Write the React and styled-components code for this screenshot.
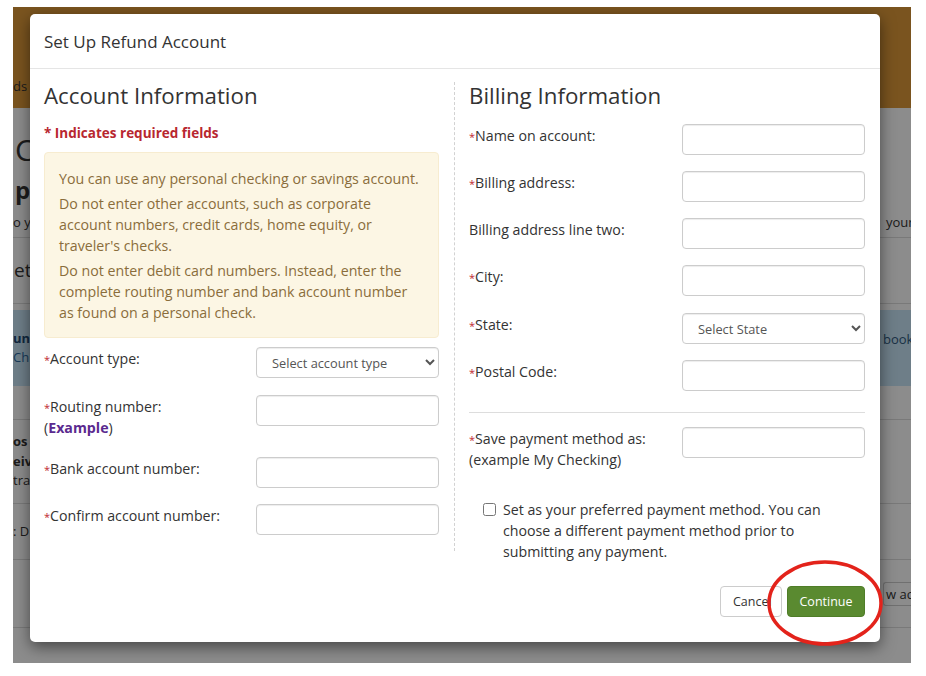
import React from "react";
import styled, { createGlobalStyle } from "styled-components";

const GlobalStyle = createGlobalStyle`
  html, body {
    margin: 0;
    padding: 0;
    background: #ffffff;
  }
  body {
    font-family: "Open Sans", "Liberation Sans", sans-serif;
    color: #333;
  }
  * {
    box-sizing: border-box;
  }
`;

const Screen = styled.div`
  width: 926px;
  height: 676px;
  padding: 7px 15px 13px 13px;
`;

const Page = styled.div`
  position: relative;
  width: 898px;
  height: 656px;
  overflow: hidden;
  background: #ffffff;
  display: flex;
  flex-direction: column;
`;

/* ---- page behind the backdrop ---- */

const BgHeader = styled.div`
  height: 101px;
  flex: none;
  background: #df9a3a;
  display: flex;
  align-items: flex-end;
  padding-bottom: 12px;
  font-size: 13px;
`;

const BgRow = styled.div`
  display: grid;
  grid-template-columns: 1fr 28px;
  align-items: ${(p) => p.$align || "center"};
  height: ${(p) => p.$h}px;
  flex: none;
  background: ${(p) => p.$bg || "transparent"};
  border-bottom: ${(p) => (p.$line ? "1px solid #dddddd" : "none")};
  margin-top: ${(p) => p.$mt || 0}px;
  white-space: nowrap;
  overflow: hidden;
`;

const BgText = styled.div`
  font-size: ${(p) => p.$size || 13}px;
  font-weight: ${(p) => (p.$bold ? 700 : 400)};
  color: ${(p) => p.$color || "#333333"};
  line-height: 1.5;
  padding-left: ${(p) => p.$pl || 0}px;
  padding-bottom: ${(p) => p.$pb || 0}px;
  overflow: hidden;
`;

const BgButton = styled.div`
  border: 1px solid #cccccc;
  border-right: none;
  border-radius: 3px 0 0 3px;
  height: 24px;
  font-size: 13px;
  line-height: 22px;
  padding-left: 2px;
  color: #333;
  overflow: hidden;
`;

const Backdrop = styled.div`
  position: absolute;
  inset: 0;
  background: rgba(0, 0, 0, 0.45);
`;

/* ---- modal ---- */

const Modal = styled.div`
  position: absolute;
  left: 17px;
  top: 7px;
  width: 850px;
  height: 628px;
  background: #ffffff;
  border-radius: 5px;
  box-shadow: 0 5px 15px rgba(0, 0, 0, 0.5);
  display: flex;
  flex-direction: column;
`;

const ModalHeader = styled.div`
  height: 55px;
  border-bottom: 1px solid #e5e5e5;
  padding: 0 14px;
  display: flex;
  align-items: center;
`;

const ModalTitle = styled.h4`
  margin: 0;
  font-size: 17px;
  font-weight: 400;
  color: #333;
`;

const ModalBody = styled.div`
  flex: 1;
  display: grid;
  grid-template-columns: 411px 1fr;
  align-items: start;
  padding: 13px 15px 0 14px;
`;

const Column = styled.div`
  display: flex;
  flex-direction: column;
  padding-right: ${(p) => (p.$divided ? 15 : 0)}px;
  padding-left: ${(p) => (p.$divided ? 0 : 14)}px;
  padding-bottom: ${(p) => (p.$divided ? 16 : 0)}px;
  border-right: ${(p) => (p.$divided ? "1px dashed #d2d2d2" : "none")};
`;

const SectionTitle = styled.h3`
  margin: 0;
  font-size: 22.3px;
  font-weight: 400;
  line-height: 28px;
  color: #333;
`;

const RequiredNote = styled.div`
  margin-top: 13px;
  font-size: 13.5px;
  font-weight: 700;
  line-height: 21px;
  color: #b8272f;
`;

const Notice = styled.div`
  margin-top: 8px;
  padding: 15px 14px 14px;
  background: #fcf6e4;
  border: 1px solid #f7ecd0;
  border-radius: 4px;
  color: #8a6d3b;
  font-size: 14.2px;
  line-height: 21px;
`;

const NoticeLine = styled.p`
  margin: 0 0 4px;
  &:last-child {
    margin-bottom: 0;
  }
`;

const FieldRow = styled.div`
  display: grid;
  grid-template-columns: 1fr 183px;
  align-items: start;
  margin-top: ${(p) => p.$mt ?? 16}px;
`;

const Label = styled.label`
  font-size: 14.2px;
  line-height: 21px;
  padding-top: 1px;
  color: #333;
`;

const Star = styled.span`
  color: #c0282f;
  font-size: 11px;
  vertical-align: top;
  position: relative;
  top: 1px;
`;

const ExampleLink = styled.a`
  color: #5b2a8f;
  font-weight: 700;
  text-decoration: none;
`;

const TextInput = styled.input`
  width: 183px;
  height: 31px;
  border: 1px solid #cccccc;
  border-radius: 4px;
  box-shadow: inset 0 1px 1px rgba(0, 0, 0, 0.075);
  padding: 6px 12px;
  font-family: inherit;
  font-size: 13px;
  background: #fff;
`;

const Select = styled.select`
  width: 183px;
  height: 31px;
  border: 1px solid #cccccc;
  border-radius: 4px;
  box-shadow: inset 0 1px 1px rgba(0, 0, 0, 0.075);
  padding: 4px 6px 4px 11px;
  font-family: inherit;
  font-size: 12.8px;
  color: #555;
  background: #fff;
`;

const Rule = styled.hr`
  margin: 21px 0 0;
  border: 0;
  border-top: 1px solid #dddddd;
`;

const CheckRow = styled.label`
  display: flex;
  gap: 4px;
  margin-top: 29px;
  padding-left: 14px;
  font-size: 14.2px;
  line-height: 21px;
  color: #333;
`;

const Check = styled.input`
  margin: 4px 3px 0 0;
  width: 13px;
  height: 13px;
  flex: none;
`;

const Footer = styled.div`
  display: flex;
  justify-content: flex-end;
  gap: 5px;
  padding: 0 15px 25px;
`;

const Button = styled.button`
  height: 31px;
  padding: 0 10px 0 ${(p) => (p.$primary ? 10 : 12)}px;
  border-radius: 4px;
  font-family: inherit;
  font-size: 12.5px;
  border: 1px solid ${(p) => (p.$primary ? "#4f7d28" : "#cccccc")};
  background: ${(p) => (p.$primary ? "#5a8a30" : "#ffffff")};
  color: ${(p) => (p.$primary ? "#ffffff" : "#333333")};
  width: ${(p) => p.$w}px;
  text-align: ${(p) => (p.$primary ? "center" : "left")};
`;

const Highlight = styled.svg`
  position: absolute;
  left: 753px;
  top: 549px;
  pointer-events: none;
`;

const Req = ({ children }) => (
  <>
    <Star>*</Star>
    {children}
  </>
);

const Field = ({ label, required, select, placeholder, mt, extra }) => (
  <FieldRow $mt={mt}>
    <Label>
      {required ? <Req>{label}</Req> : label}
      {extra}
    </Label>
    {select ? (
      <Select defaultValue="">
        <option value="">{placeholder}</option>
      </Select>
    ) : (
      <TextInput type="text" />
    )}
  </FieldRow>
);

export default function App() {
  return (
    <>
      <GlobalStyle />
      <Screen>
        <Page>
          <BgHeader>
            <BgText>ds</BgText>
          </BgHeader>
          <BgRow $h={64} $align="end">
            <BgText $size={30} $pl={2}>Co</BgText>
            <div />
          </BgRow>
          <BgRow $h={36}>
            <BgText $size={24} $bold $pl={2}>pa</BgText>
            <div />
          </BgRow>
          <BgRow $h={30} $line>
            <BgText>o you</BgText>
            <BgText $pl={3}>your</BgText>
          </BgRow>
          <BgRow $h={66} $line>
            <BgText $size={19} $pl={1}>et</BgText>
            <div />
          </BgRow>
          <BgRow $h={76} $bg="#c8e6f8" $mt={6}>
            <BgText>
              <BgText $bold $color="#1f4a73">un</BgText>
              <BgText $color="#2d6aa3">Ch</BgText>
            </BgText>
            <BgText $color="#31597d" $pb={16}>
              book
            </BgText>
          </BgRow>
          <BgRow $h={34} $line>
            <div />
            <div />
          </BgRow>
          <BgRow $h={84} $line>
            <BgText>
              <BgText $bold>os</BgText>
              <BgText $bold>eiv</BgText>
              <BgText>tra</BgText>
            </BgText>
            <div />
          </BgRow>
          <BgRow $h={56} $line>
            <BgText>: D</BgText>
            <div />
          </BgRow>
          <BgRow $h={68} $line>
            <div />
            <BgButton>w ac</BgButton>
          </BgRow>

          <Backdrop />

          <Modal>
            <ModalHeader>
              <ModalTitle>Set Up Refund Account</ModalTitle>
            </ModalHeader>
            <ModalBody>
              <Column $divided>
                <SectionTitle>Account Information</SectionTitle>
                <RequiredNote>* Indicates required fields</RequiredNote>
                <Notice>
                  <NoticeLine>
                    You can use any personal checking or savings account.
                  </NoticeLine>
                  <NoticeLine>
                    Do not enter other accounts, such as corporate account
                    numbers, credit cards, home equity, or traveler's checks.
                  </NoticeLine>
                  <NoticeLine>
                    Do not enter debit card numbers. Instead, enter the
                    complete routing number and bank account number as found on
                    a personal check.
                  </NoticeLine>
                </Notice>
                <Field
                  label="Account type:"
                  required
                  select
                  placeholder="Select account type"
                  mt={9}
                />
                <Field
                  label="Routing number:"
                  required
                  mt={17}
                  extra={
                    <>
                      <br />(<ExampleLink href="#">Example</ExampleLink>)
                    </>
                  }
                />
                <Field label="Bank account number:" required mt={19} />
                <Field label="Confirm account number:" required />
              </Column>

              <Column>
                <SectionTitle>Billing Information</SectionTitle>
                <Field label="Name on account:" required mt={14} />
                <Field label="Billing address:" required />
                <Field label="Billing address line two:" />
                <Field label="City:" required />
                <Field
                  label="State:"
                  required
                  select
                  placeholder="Select State"
                  mt={17}
                />
                <Field label="Postal Code:" required />
                <Rule />
                <Field
                  label="Save payment method as:"
                  required
                  mt={14}
                  extra={
                    <>
                      <br />
                      (example My Checking)
                    </>
                  }
                />
                <CheckRow>
                  <Check type="checkbox" />
                  <span>
                    Set as your preferred payment method. You can choose a
                    different payment method prior to submitting any payment.
                  </span>
                </CheckRow>
              </Column>
            </ModalBody>
            <Footer>
              <Button $w={62}>Cancel</Button>
              <Button $primary $w={78}>
                Continue
              </Button>
            </Footer>
          </Modal>

          <Highlight width="120" height="92" viewBox="0 0 120 92">
            <ellipse
              cx="59"
              cy="47"
              rx="56"
              ry="41"
              fill="none"
              stroke="#e3231b"
              strokeWidth="3.5"
            />
          </Highlight>
        </Page>
      </Screen>
    </>
  );
}
